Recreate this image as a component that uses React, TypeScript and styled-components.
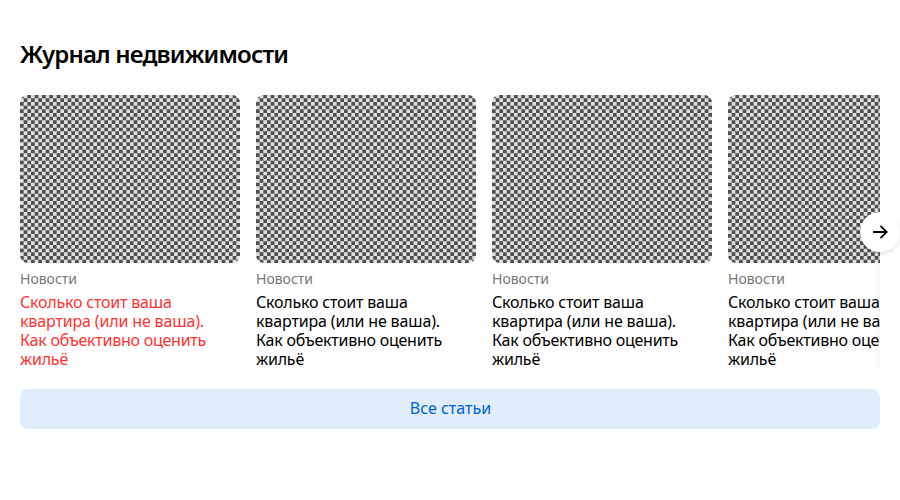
import React from "react";
import styled, { createGlobalStyle } from "styled-components";

const GlobalStyle = createGlobalStyle`
  * { box-sizing: border-box; }
  body { margin: 0; background: #fff; overflow: hidden; font-family: "Noto Sans", sans-serif; }
`;

const Section = styled.section`
  padding: 39px 20px 0;
`;

const Title = styled.h2`
  margin: 0 0 26px;
  font-size: 24px;
  line-height: 30px;
  font-weight: 600;
  letter-spacing: -0.84px;
  color: #000;
  white-space: nowrap;
`;

const Carousel = styled.div`
  position: relative;
  height: 274px;
`;

const Viewport = styled.div`
  height: 100%;
  overflow: hidden;
`;

const Track = styled.div`
  display: flex;
  gap: 16px;
`;

const Card = styled.article`
  flex: 0 0 220px;
`;

const Cover = styled.svg`
  display: block;
  width: 220px;
  height: 168px;
  border-radius: 8px;
`;

const Category = styled.div`
  margin-top: 8px;
  font-size: 14px;
  line-height: 16px;
  color: #777;
  white-space: nowrap;
`;

const Headline = styled.div<{ $active?: boolean }>`
  margin-top: 6px;
  font-size: 16px;
  line-height: 19px;
  color: ${(p) => (p.$active ? "#ff3333" : "#000")};
  white-space: nowrap;
`;

const Line = styled.div<{ $spacing: number }>`
  letter-spacing: ${(p) => p.$spacing}px;
`;

const EdgeShadow = styled.div`
  position: absolute;
  top: 0;
  right: 0;
  width: 7px;
  height: 100%;
  background: linear-gradient(270deg, rgba(0, 0, 0, 0.04), rgba(0, 0, 0, 0));
`;

const NextButton = styled.button`
  position: absolute;
  top: 117px;
  right: -20px;
  display: flex;
  align-items: center;
  justify-content: center;
  width: 40px;
  height: 40px;
  padding: 0;
  border: 0;
  border-radius: 50%;
  background: #fff;
  box-shadow: 0 2px 4px rgba(0, 0, 0, 0.12);
`;

const AllButton = styled.button`
  display: block;
  width: 100%;
  height: 40px;
  margin-top: 20px;
  padding: 0 0 2px 1px;
  border: 0;
  border-radius: 8px;
  background: #e0edfa;
  color: #0062d9;
  font: 400 16px/20px "Noto Sans", sans-serif;
`;

const lines = [
  { text: "Сколько стоит ваша", spacing: -0.2 },
  { text: "квартира (или не ваша).", spacing: -0.15 },
  { text: "Как объективно оценить", spacing: -0.25 },
  { text: "жильё", spacing: -0.2 },
];

const CELL = 22 / 6;

// Dark cells of a 6x6 checker block; a seventh row fills the strip left by the vertical offset.
const darkCells = Array.from({ length: 7 }, (_, row) =>
  [0, 1, 2].map((n) => {
    const x = (2 * n + (row % 2)) * CELL;
    const y = row * CELL - 1 / 3;
    return `M${x.toFixed(3)} ${y.toFixed(3)}h3.667v3.667h-3.667z`;
  }).join(""),
).join("");

const Checker = ({ id }: { id: string }) => (
  <Cover viewBox="0 0 220 168" aria-hidden="true">
    <defs>
      <pattern id={id} width="22" height="22" patternUnits="userSpaceOnUse">
        <rect width="22" height="22" fill="#e0e0e0" />
        <path d={darkCells} fill="#4f4f4f" />
      </pattern>
    </defs>
    <rect width="220" height="168" fill={`url(#${id})`} />
  </Cover>
);

export default function App() {
  return (
    <>
      <GlobalStyle />
      <Section>
        <Title>Журнал недвижимости</Title>
        <Carousel>
          <Viewport>
            <Track>
              {[0, 1, 2, 3].map((i) => (
                <Card key={i}>
                  <Checker id={`cover-${i}`} />
                  <Category>Новости</Category>
                  <Headline $active={i === 0}>
                    {lines.map((line) => (
                      <Line key={line.text} $spacing={line.spacing}>
                        {line.text}
                      </Line>
                    ))}
                  </Headline>
                </Card>
              ))}
            </Track>
          </Viewport>
          <EdgeShadow />
          <NextButton aria-label="Дальше">
            <svg width="20" height="20" viewBox="0 0 20 20" fill="none" stroke="#000" strokeWidth="1.8">
              <path d="M3 10h13.5M10.5 3.8L16.7 10l-6.2 6.2" />
            </svg>
          </NextButton>
        </Carousel>
        <AllButton>Все статьи</AllButton>
      </Section>
    </>
  );
}
